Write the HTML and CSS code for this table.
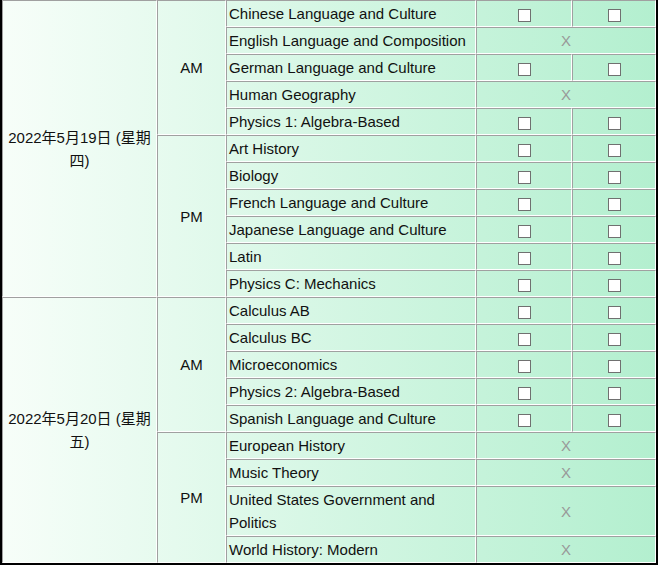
FILE: index.html
```html
<!DOCTYPE html>
<html>
<head>
<meta charset="utf-8">
<link rel="stylesheet" href="styles.css">
</head>
<body>
<div class="frame">
<table class="exams">
<colgroup>
<col class="c-date"><col class="c-half"><col class="c-subj"><col class="c-a"><col class="c-b">
</colgroup>
<tbody>
<tr>
<td class="date" rowspan="11">2022年5月19日 (星期四)</td>
<td class="half" rowspan="5">AM</td>
<td class="subj">Chinese Language and Culture</td>
<td class="cb"><input type="checkbox"></td><td class="cb"><input type="checkbox"></td>
</tr>
<tr><td class="subj">English Language and Composition</td><td class="na" colspan="2">X</td></tr>
<tr><td class="subj">German Language and Culture</td><td class="cb"><input type="checkbox"></td><td class="cb"><input type="checkbox"></td></tr>
<tr><td class="subj">Human Geography</td><td class="na" colspan="2">X</td></tr>
<tr><td class="subj">Physics 1: Algebra-Based</td><td class="cb"><input type="checkbox"></td><td class="cb"><input type="checkbox"></td></tr>
<tr>
<td class="half" rowspan="6">PM</td>
<td class="subj">Art History</td><td class="cb"><input type="checkbox"></td><td class="cb"><input type="checkbox"></td>
</tr>
<tr><td class="subj">Biology</td><td class="cb"><input type="checkbox"></td><td class="cb"><input type="checkbox"></td></tr>
<tr><td class="subj">French Language and Culture</td><td class="cb"><input type="checkbox"></td><td class="cb"><input type="checkbox"></td></tr>
<tr><td class="subj">Japanese Language and Culture</td><td class="cb"><input type="checkbox"></td><td class="cb"><input type="checkbox"></td></tr>
<tr><td class="subj">Latin</td><td class="cb"><input type="checkbox"></td><td class="cb"><input type="checkbox"></td></tr>
<tr><td class="subj">Physics C: Mechanics</td><td class="cb"><input type="checkbox"></td><td class="cb"><input type="checkbox"></td></tr>
<tr>
<td class="date" rowspan="9">2022年5月20日 (星期五)</td>
<td class="half" rowspan="5">AM</td>
<td class="subj">Calculus AB</td><td class="cb"><input type="checkbox"></td><td class="cb"><input type="checkbox"></td>
</tr>
<tr><td class="subj">Calculus BC</td><td class="cb"><input type="checkbox"></td><td class="cb"><input type="checkbox"></td></tr>
<tr><td class="subj">Microeconomics</td><td class="cb"><input type="checkbox"></td><td class="cb"><input type="checkbox"></td></tr>
<tr><td class="subj">Physics 2: Algebra-Based</td><td class="cb"><input type="checkbox"></td><td class="cb"><input type="checkbox"></td></tr>
<tr><td class="subj">Spanish Language and Culture</td><td class="cb"><input type="checkbox"></td><td class="cb"><input type="checkbox"></td></tr>
<tr>
<td class="half" rowspan="4">PM</td>
<td class="subj">European History</td><td class="na" colspan="2">X</td>
</tr>
<tr><td class="subj">Music Theory</td><td class="na" colspan="2">X</td></tr>
<tr><td class="subj">United States Government and Politics</td><td class="na" colspan="2">X</td></tr>
<tr><td class="subj">World History: Modern</td><td class="na" colspan="2">X</td></tr>
</tbody>
</table>
</div>
</body>
</html>
```

FILE: styles.css
```css
html, body {
  margin: 0;
  padding: 0;
  background: #fff;
}

.frame {
  width: 654px;
  border-left: 2px solid #000;
  border-right: 2px solid #000;
  border-bottom: 2px solid #000;
  background: linear-gradient(to right, #f7fef9, #b3efcf);
}

.exams {
  width: 654px;
  table-layout: fixed;
  border-collapse: separate;
  border-spacing: 0;
  font-family: "Liberation Sans", Arial, "Noto Sans CJK SC", sans-serif;
  font-size: 15px;
  line-height: 23px;
  color: #111;
}

.c-date { width: 155px; }
.c-half { width: 69px; }
.c-subj { width: 250px; }
.c-a { width: 96px; }
.c-b { width: 84px; }

.exams td {
  border-top: 1px solid #a0a0a0;
  border-left: 1px solid #a0a0a0;
  border-right: 1px solid #fff;
  border-bottom: 1px solid #fff;
  padding: 1px 2px;
  vertical-align: middle;
}

.date {
  text-align: center;
  padding-top: 2px;
  padding-bottom: 0;
}

.half {
  text-align: center;
}

.cb {
  text-align: center;
}

.cb input {
  appearance: none;
  -webkit-appearance: none;
  display: block;
  box-sizing: border-box;
  width: 13px;
  height: 13px;
  margin: 3px auto 0 auto;
  border: 1px solid #707070;
  border-radius: 0;
  background: #fff;
}

.na {
  text-align: center;
  color: #999;
}
```
